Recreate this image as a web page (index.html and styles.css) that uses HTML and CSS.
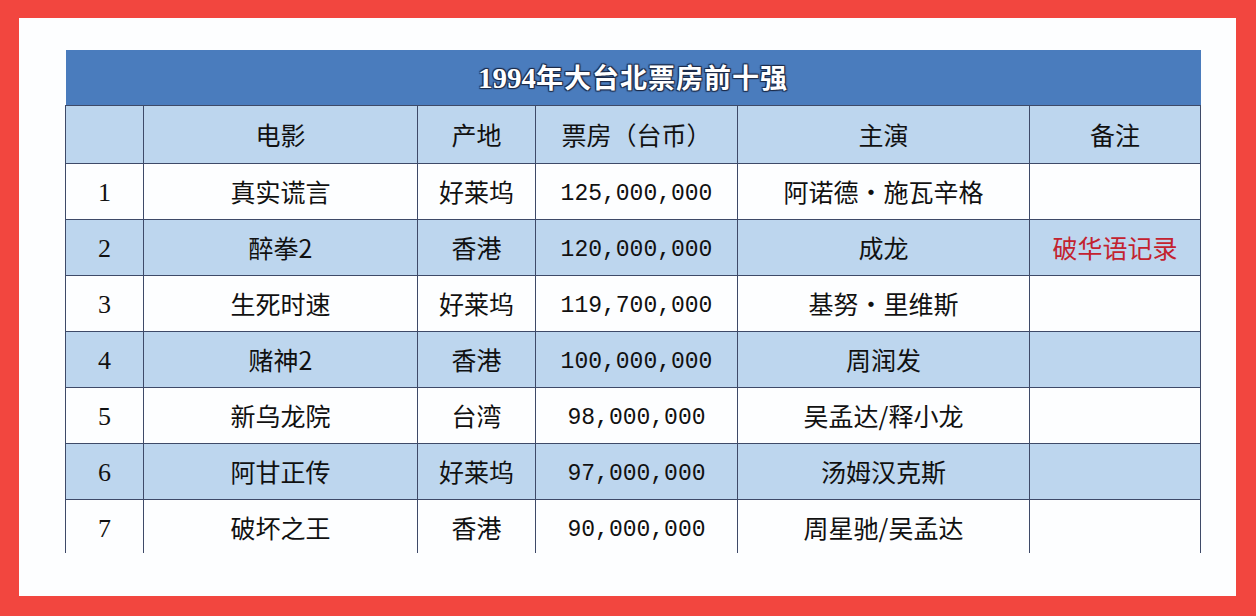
FILE: index.html
```html
<!DOCTYPE html>
<html lang="zh-CN">
<head>
<meta charset="utf-8">
<title>1994年大台北票房前十强</title>
<link rel="stylesheet" href="styles.css">
</head>
<body>
<div class="frame">
  <div class="sheet">
    <div class="clip">
      <table class="box">
        <colgroup>
          <col class="c1"><col class="c2"><col class="c3"><col class="c4"><col class="c5"><col class="c6">
        </colgroup>
        <thead>
          <tr class="title"><th colspan="6"><span class="num">1994</span>年大台北票房前十强</th></tr>
          <tr class="head"><th></th><th>电影</th><th>产地</th><th>票房（台币）</th><th>主演</th><th>备注</th></tr>
        </thead>
        <tbody>
          <tr><td class="idx">1</td><td>真实谎言</td><td>好莱坞</td><td class="money">125,000,000</td><td>阿诺德·施瓦辛格</td><td></td></tr>
          <tr class="alt"><td class="idx">2</td><td>醉拳2</td><td>香港</td><td class="money">120,000,000</td><td>成龙</td><td class="note">破华语记录</td></tr>
          <tr><td class="idx">3</td><td>生死时速</td><td>好莱坞</td><td class="money">119,700,000</td><td>基努·里维斯</td><td></td></tr>
          <tr class="alt"><td class="idx">4</td><td>赌神2</td><td>香港</td><td class="money">100,000,000</td><td>周润发</td><td></td></tr>
          <tr><td class="idx">5</td><td>新乌龙院</td><td>台湾</td><td class="money">98,000,000</td><td>吴孟达/释小龙</td><td></td></tr>
          <tr class="alt"><td class="idx">6</td><td>阿甘正传</td><td>好莱坞</td><td class="money">97,000,000</td><td>汤姆汉克斯</td><td></td></tr>
          <tr><td class="idx">7</td><td>破坏之王</td><td>香港</td><td class="money">90,000,000</td><td>周星驰/吴孟达</td><td></td></tr>
        </tbody>
      </table>
    </div>
  </div>
</div>
</body>
</html>
```

FILE: styles.css
```css
html, body {
  margin: 0;
  padding: 0;
}
body {
  width: 1256px;
  height: 616px;
  overflow: hidden;
  background: #f2463f;
  font-family: "Noto Sans CJK SC", "Noto Sans", sans-serif;
}
.frame {
  box-sizing: border-box;
  width: 1256px;
  height: 616px;
  padding: 18px 20px 20px 19px;
}
.sheet {
  box-sizing: border-box;
  width: 100%;
  height: 100%;
  background: #fdfeff;
  padding: 32px 0 0 45px;
}
.clip {
  width: 1138px;
  height: 503px;
  overflow: hidden;
  padding-left: 1px;
}
.box {
  border-collapse: collapse;
  table-layout: fixed;
  width: 1135px;
  color: #111;
}
.c1 { width: 78px; }
.c2 { width: 274px; }
.c3 { width: 118px; }
.c4 { width: 202px; }
.c5 { width: 292px; }
.c6 { width: 171px; }

.box th, .box td {
  border: 1.5px solid #3e4a68;
  text-align: center;
  vertical-align: middle;
  padding: 0;
  font-size: 25px;
  font-weight: 400;
  line-height: 1;
}
.title th {
  height: 55px;
  background: #4a7cbd;
  border-top: none;
  border-left: none;
  border-right: none;
  color: #fff;
  font-weight: 700;
  font-size: 27px;
  letter-spacing: 1px;
  text-shadow: 0 0 1px #1d2c4a, 1px 1px 1px #1d2c4a, -1px -1px 1px #1d2c4a, 1px -1px 1px #1d2c4a, -1px 1px 1px #1d2c4a;
}
.title .num {
  font-family: "Liberation Serif", serif;
  font-weight: 700;
  font-size: 29px;
  letter-spacing: 0;
}
.head th {
  height: 57px;
  background: #bdd6ee;
}
.box td {
  height: 55px;
  background: #fdfeff;
}
.box tr.alt td {
  background: #bdd6ee;
}
.box td.idx {
  font-family: "Liberation Serif", serif;
  font-size: 26px;
  height: 53px;
  padding-top: 2px;
}
.box td.money {
  font-family: "Liberation Mono", monospace;
  font-size: 23px;
  height: 50px;
  padding-top: 5px;
}
.note {
  color: #c3222f;
}
```
